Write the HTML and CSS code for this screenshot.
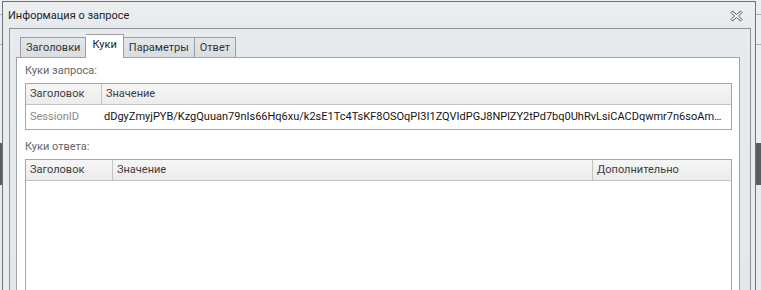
FILE: index.html
```html
<!DOCTYPE html>
<html lang="ru">
<head>
<meta charset="utf-8">
<title>Информация о запросе</title>
<link rel="stylesheet" href="styles.css">
</head>
<body>
<div class="dialog">
  <div class="titlebar">
    <span class="title">Информация о запросе</span>
    <svg class="close" width="13" height="12" viewBox="0 0 13 12">
      <polygon points="1,2.5 2.5,1 6.5,4.5 10.5,1 12,2.5 8.5,6 12,9.5 10.5,11 6.5,7.5 2.5,11 1,9.5 4.5,6" fill="#fff" stroke="#4f4f4f" stroke-width="1" stroke-linejoin="miter"/>
    </svg>
  </div>
  <div class="panel">
    <div class="tabs">
      <div class="tab">Заголовки</div>
      <div class="tab active">Куки</div>
      <div class="tab">Параметры</div>
      <div class="tab">Ответ</div>
    </div>
    <div class="page">
      <div class="label">Куки запроса:</div>
      <div class="grid grid-req">
        <div class="hcell">Заголовок</div>
        <div class="hcell">Значение</div>
        <div class="cell muted">SessionID</div>
        <div class="cell value">dDgyZmyjPYB/KzgQuuan79nIs66Hq6xu/k2sE1Tc4TsKF8OSOqPI3I1ZQVIdPGJ8NPlZY2tPd7bq0UhRvLsiCACDqwmr7n6soAmoMmnXbQ2</div>
      </div>
      <div class="label label-resp">Куки ответа:</div>
      <div class="grid grid-resp">
        <div class="hcell">Заголовок</div>
        <div class="hcell">Значение</div>
        <div class="hcell">Дополнительно</div>
        <div class="empty"></div>
      </div>
    </div>
  </div>
</div>
</body>
</html>
```
FILE: styles.css
```css
html, body {
  margin: 0;
  padding: 0;
  height: 290px;
  overflow: hidden;
}
body {
  font-family: Roboto, "Noto Sans", sans-serif;
  font-size: 11px;
  background:
    linear-gradient(#eceef0 0 14px, #a9adb1 14px 15px, #eceef0 15px 44px, #a9adb1 44px 45px, #eceef0 45px 143px, #5a5d60 143px 185px, #e9ebed 185px);
  padding: 1px 0 0 2px;
  box-sizing: border-box;
}
.dialog {
  width: 754px;
  height: 310px;
  box-sizing: border-box;
  border: 1px solid #6d7278;
  border-bottom: none;
  background: #e9ecef;
  display: flex;
  flex-direction: column;
}
.titlebar {
  height: 26px;
  flex: none;
  display: flex;
  align-items: center;
  justify-content: space-between;
  padding: 0 12px 0 5px;
  color: #1e1e1e;
  background: linear-gradient(#edeff1, #e7eaed);
}
.title {
  margin-top: 1px;
}
.close {
  display: block;
  margin-top: 2px;
}
.panel {
  flex: 1;
  margin: 0 4px 0 6px;
  border: 1px solid #8c9196;
  border-bottom: none;
  background: linear-gradient(#e8ebee, #e4e7ea);
  padding: 5px 10px 0 6px;
  display: flex;
  flex-direction: column;
}
.tabs {
  display: flex;
  align-items: flex-end;
  padding-left: 4px;
  height: 23px;
  position: relative;
  z-index: 1;
}
.tab {
  height: 20px;
  box-sizing: border-box;
  padding: 0 5px;
  border: 1px solid #9b9fa3;
  border-bottom: none;
  border-left-width: 0;
  background: linear-gradient(#e4e7ea, #d9dde1);
  color: #333;
  line-height: 19px;
}
.tab:first-child {
  border-left-width: 1px;
}
.tab.active {
  height: 24px;
  margin-bottom: -1px;
  background: #fff;
  border-left-width: 0;
  color: #1e1e1e;
  line-height: 20px;
  padding: 0 6px;
}
.page {
  flex: 1;
  background: #fff;
  border: 1px solid #9fa3a7;
  border-bottom: none;
  padding: 5px 7px 0 8px;
}
.label {
  color: #666;
  line-height: 16px;
  height: 20px;
}
.label-resp {
  margin-top: 9px;
}
.grid {
  display: grid;
  border: 1px solid #a7a7a7;
  color: #333;
}
.grid-req {
  grid-template-columns: 75px 1fr;
}
.grid-resp {
  grid-template-columns: 86px 480px 1fr;
  height: 200px;
  grid-template-rows: 21px 1fr;
}
.hcell {
  height: 21px;
  box-sizing: border-box;
  padding: 0 4px;
  line-height: 20px;
  background: linear-gradient(#f6f6f6, #ececec);
  border-bottom: 1px solid #c3c3c3;
  border-left: 1px solid #c3c3c3;
  color: #3c3c3c;
  white-space: nowrap;
}
.hcell:first-child {
  border-left: none;
}
.cell {
  height: 24px;
  line-height: 23px;
  padding: 0 4px;
  white-space: nowrap;
  overflow: hidden;
  text-overflow: ellipsis;
  min-width: 0;
}
.cell.muted {
  color: #888;
}
.cell.value {
  color: #141414;
  padding-left: 3px;
}
.empty {
  grid-column: 1 / -1;
  background: #fff;
}
```
